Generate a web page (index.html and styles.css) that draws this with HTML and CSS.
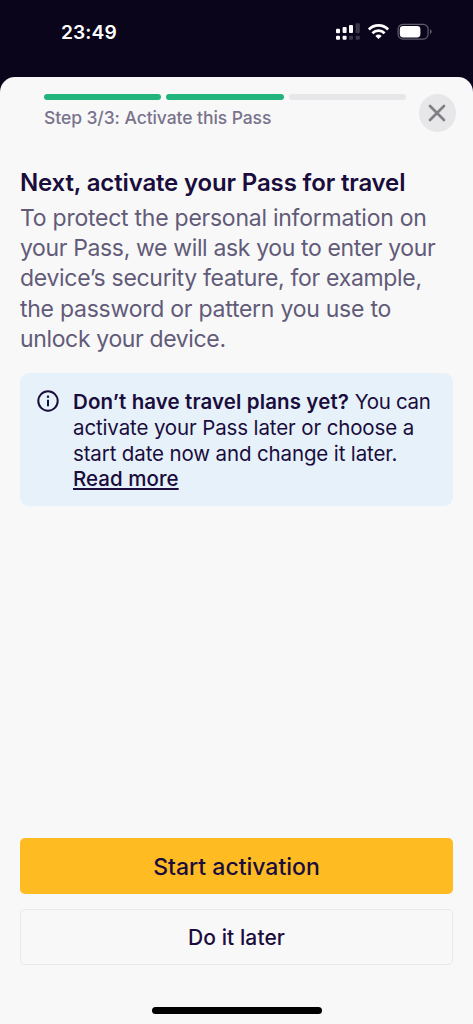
FILE: index.html
```html
<!DOCTYPE html>
<html lang="en">
<head>
<meta charset="utf-8">
<title>Activate this Pass</title>
<link rel="stylesheet" href="styles.css">
</head>
<body>
<div class="status">
  <span class="time">23:49</span>
  <svg class="status-icons" width="98" height="18" viewBox="0 0 98 18">
    <g fill="#fff">
      <rect x="1" y="6.700" width="4" height="4.600" rx="1"/>
      <rect x="7.600" y="5" width="4" height="6" rx="1"/>
      <rect x="14" y="3" width="4" height="8" rx="1"/>
      <rect x="1" y="13.700" width="4" height="4" rx="1"/>
      <rect x="7.600" y="13.700" width="4" height="4" rx="1"/>
    </g>
    <g fill="#3c3748">
      <rect x="20.600" y="1.300" width="4.200" height="10" rx="1"/>
      <rect x="14" y="13.700" width="4" height="4" rx="1"/>
      <rect x="20.600" y="13.700" width="4.200" height="4" rx="1"/>
    </g>
    <g fill="none" stroke="#fff" stroke-width="2.800">
      <path d="M33.900 7.400A13.500 13.500 0 0 1 53.100 7.400"/>
      <path d="M37.400 11.200A8.700 8.700 0 0 1 49.600 11.200"/>
    </g>
    <path d="M40.300 13.900A4.800 4.800 0 0 1 46.700 13.900L43.500 17.100Z" fill="#fff"/>
    <rect x="63.100" y="2.300" width="30" height="14.800" rx="4.800" fill="none" stroke="#625e6c" stroke-width="1.200"/>
    <rect x="64.800" y="4" width="20.600" height="11.400" rx="3.400" fill="#fff"/>
    <path d="M95 7.300C97.200 8.200 97.200 11.200 95 12.100Z" fill="#625e6c"/>
  </svg>
</div>
<main class="sheet">
  <header class="header">
    <div class="steps">
      <div class="bars"><i class="bar done"></i><i class="bar done"></i><i class="bar"></i></div>
      <div class="step-label">Step 3/3: Activate this Pass</div>
    </div>
    <button class="close" aria-label="Close">
      <svg width="18" height="18" viewBox="0 0 18 18" fill="none" stroke="#7f7f84" stroke-width="2.700" stroke-linecap="round"><path d="M2 2l14 14M16 2l-14 14"/></svg>
    </button>
  </header>
  <h1 class="title">Next, activate your Pass for travel</h1>
  <p class="body"><span class="loose">To protect the personal information on</span><br><span class="tight">your Pass, we will ask you to enter your</span><br>device’s security feature, for example,<br><span class="loose">the password or pattern you use to</span><br><span class="tight">unlock your device.</span></p>
  <section class="notice">
    <svg class="info" width="22" height="22" viewBox="0 0 22 22" fill="none" stroke="#1a0d3c" stroke-width="2"><circle cx="11" cy="11" r="9.700"/><path d="M11 9.800v6.400"/><path d="M11 5.600v2.200" stroke-width="2.200"/></svg>
    <p class="notice-text"><b class="lead">Don’t have travel plans yet?</b> <span class="aside">You can</span><br>activate your Pass later or choose a<br>start date now and change it later.<br><a class="more">Read more</a></p>
  </section>
  <div class="actions">
    <button class="btn primary">Start activation</button>
    <button class="btn secondary">Do it later</button>
  </div>
  <div class="home"></div>
</main>
</body>
</html>
```
FILE: styles.css
```css
* { box-sizing: border-box; }
body {
  margin: 0;
  height: 1024px;
  display: flex;
  flex-direction: column;
  overflow: hidden;
  background: #0b051b;
  color: #1a0d3c;
  font-family: Inter, "Liberation Sans", sans-serif;
}
.status {
  height: 77px;
  flex: none;
  display: flex;
  justify-content: space-between;
  align-items: flex-start;
  padding: 22px 40px 0 61px;
  color: #fff;
}
.time { font-size: 19.2px; line-height: 20px; font-weight: 600; letter-spacing: 0.1px; }
.sheet {
  flex: 1;
  display: flex;
  flex-direction: column;
  padding: 17px 20px 10px;
  border-radius: 15px 15px 0 0;
  background: #f8f8f8;
}
.header { display: flex; justify-content: space-between; padding-left: 24px; margin-right: -3px; height: 73px; }
.steps { width: 362px; }
.bars { display: flex; gap: 5px; }
.bar { flex: 1; height: 6px; border-radius: 3px; background: #e7e7ea; }
.bar.done { background: #21b47c; }
.step-label { margin-top: 7px; font-size: 17.5px; line-height: 22px; font-weight: 500; letter-spacing: -0.08px; color: #79738c; }
.close {
  width: 37.5px; height: 37.5px;
  padding: 0; border: 0; border-radius: 50%;
  background: #e7e7e9;
  display: grid; place-items: center;
}
.title { margin: 0; font-size: 24px; line-height: 32px; font-weight: 600; letter-spacing: -0.15px; white-space: nowrap; }
.body { margin: 3.7px 0 0; font-size: 23px; line-height: 30.3px; letter-spacing: -0.31px; white-space: nowrap; color: #625b78; }
.loose { letter-spacing: -0.25px; }
.tight { letter-spacing: -0.36px; }
.notice {
  display: flex;
  height: 133px;
  margin-top: 19.3px;
  padding: 16px 17px;
  gap: 14px;
  border-radius: 9px;
  background: #e6f1fa;
}
.info { flex: none; margin-top: 1px; }
.notice-text { margin: 0; font-size: 20.5px; line-height: 25.6px; letter-spacing: -0.13px; white-space: nowrap; }
.lead { font-weight: 600; letter-spacing: 0.11px; }
.aside { letter-spacing: -0.3px; }
.more { font-weight: 500; letter-spacing: 0.05px; text-decoration: underline; text-decoration-thickness: 1.5px; text-underline-offset: 2px; text-decoration-skip-ink: none; }
.actions { margin-top: auto; display: flex; flex-direction: column; gap: 15px; }
.btn {
  height: 56px; padding: 0;
  border: 0; border-radius: 5px;
  font-family: inherit; font-weight: 500; color: #1a0d3c;
}
.primary { padding-top: 1px; background: #ffbb22; font-size: 23px; letter-spacing: 0; }
.secondary { background: #f8f8f8; border: 1.5px solid #e9e9eb; font-size: 21px; letter-spacing: 0.1px; }
.home { width: 170px; height: 7px; margin: 42px auto 0; border-radius: 4px; background: #000; }
```
